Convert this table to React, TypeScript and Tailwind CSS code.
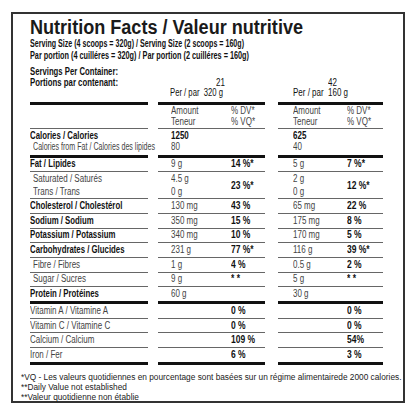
import { useLayoutEffect, useRef, useState, type ReactNode } from "react";

// Helvetica Condensed look: Arial metrics squeezed horizontally
const T = ({ children, s = "scale-x-[0.8]" }: { children: ReactNode; s?: string }) => (
  <span className={`inline-block origin-left whitespace-pre ${s}`}>{children}</span>
);

// squeeze a text until it is exactly w px wide (measured at runtime)
const Fit = ({ w, children }: { w: number; children: ReactNode }) => {
  const ref = useRef<HTMLSpanElement>(null);
  const [k, setK] = useState(1);
  useLayoutEffect(() => {
    const el = ref.current;
    if (el) setK(w / el.getBoundingClientRect().width);
  }, [w]);
  return (
    <span
      ref={ref}
      className="inline-block origin-left whitespace-pre"
      style={{ transform: `scaleX(${k})` }}
    >
      {children}
    </span>
  );
};

type Cell = [string, string];

const Sep = ({ thick }: { thick?: boolean }) => {
  const bar = thick ? "h-[3px] bg-[#111]" : "h-px bg-[#666]";
  return (
    <div className="flex">
      <div className={`w-[118px] ${bar}`} />
      <div className={`ml-[10px] w-[107px] ${bar}`} />
      <div className={`ml-[13px] w-[105px] ${bar}`} />
    </div>
  );
};

const Row = ({
  label,
  kind = "bold",
  a,
  b,
}: {
  label: string;
  kind?: "bold" | "sub" | "plain";
  a: Cell;
  b: Cell;
}) => {
  const lab =
    kind === "bold"
      ? "font-bold text-[#111]"
      : kind === "sub"
        ? "pl-[3px] text-[#444]"
        : "text-[#444]";
  return (
    <div className="flex h-[13.7px] items-center text-[10px] leading-none">
      <div className={`w-[118px] ${lab}`}>
        <T s={kind === "bold" ? "scale-x-[0.78]" : "scale-x-[0.8]"}>{label}</T>
      </div>
      <div className="ml-[10px] flex w-[107px] pl-[13px]">
        <span className="w-[60px] text-[#444]">
          <T>{a[0]}</T>
        </span>
        <span className="font-bold text-[#111]">
          <T s="scale-x-[0.85]">{a[1]}</T>
        </span>
      </div>
      <div className="ml-[13px] flex w-[105px] pl-[15px]">
        <span className="w-[54px] text-[#444]">
          <T>{b[0]}</T>
        </span>
        <span className="font-bold text-[#111]">
          <T s="scale-x-[0.85]">{b[1]}</T>
        </span>
      </div>
    </div>
  );
};

const Head = ({ w }: { w: string }) => (
  <>
    <div className={w}>
      <div>
        <T>Amount</T>
      </div>
      <div>
        <T>Teneur</T>
      </div>
    </div>
    <div>
      <div>
        <T>% DV*</T>
      </div>
      <div>
        <T>% VQ*</T>
      </div>
    </div>
  </>
);

export default function App() {
  return (
    <div className="h-[416px] w-[416px] bg-white pl-[11px] pt-[12px]">
      <div className="h-[391px] w-[394px] border-2 border-[#333] pl-[17px] pt-[3px] [font-family:'Liberation_Sans',Arial,sans-serif]">
        <h1 className="text-[20px] font-black leading-[20px] text-[#1a1a1a]">
          <Fit w={273}>Nutrition Facts / Valeur nutritive</Fit>
        </h1>
        <div className="mt-px text-[10px] font-bold leading-[12px] text-[#111]">
          <div>
            <Fit w={214}>Serving Size (4 scoops = 320g) / Serving Size (2 scoops = 160g)</Fit>
          </div>
          <div>
            <Fit w={219}>Par portion (4 cuilléres = 320g) / Par portion (2 cuilléres = 160g)</Fit>
          </div>
        </div>

        <div className="mt-[5px] flex text-[10px] leading-[10.5px] text-[#111]">
          <div className="w-[118px] font-bold">
            <div>
              <Fit w={88}>Servings Per Container:</Fit>
            </div>
            <div>
              <Fit w={88}>Portions par contenant:</Fit>
            </div>
          </div>
          <div className="ml-[10px] w-[107px] pt-[10.5px]">
            <div className="pl-[58px]">
              <T>21</T>
            </div>
            <div className="pl-[12px]">
              <Fit w={53}>Per / par  320 g</Fit>
            </div>
          </div>
          <div className="ml-[13px] w-[105px] pt-[10.5px]">
            <div className="pl-[50px]">
              <T>42</T>
            </div>
            <div className="pl-[15px]">
              <Fit w={55}>Per / par  160 g</Fit>
            </div>
          </div>
        </div>

        <div className="mt-[3px]">
          <Sep thick />
          <div className="flex h-[23px] text-[10px] leading-[11px] text-[#444]">
            <div className="w-[118px]" />
            <div className="ml-[10px] flex w-[107px] pl-[13px]">
              <Head w="w-[60px]" />
            </div>
            <div className="ml-[13px] flex w-[105px] pl-[15px]">
              <Head w="w-[54px]" />
            </div>
          </div>
          <Sep />

          <div className="flex h-[26px] text-[10px] leading-[11px]">
            <div className="w-[118px]">
              <div className="pt-px font-bold text-[#111]">
                <T s="scale-x-[0.78]">Calories / Calories</T>
              </div>
              <div className="pl-[3px] text-[#444]">
                <Fit w={122}>Calories from Fat / Calories des lipides</Fit>
              </div>
            </div>
            <div className="ml-[10px] w-[107px] pl-[13px] pt-px">
              <div className="font-bold text-[#111]">
                <T>1250</T>
              </div>
              <div className="text-[#444]">
                <T>80</T>
              </div>
            </div>
            <div className="ml-[13px] w-[105px] pl-[15px] pt-px">
              <div className="font-bold text-[#111]">
                <T>625</T>
              </div>
              <div className="text-[#444]">
                <T>40</T>
              </div>
            </div>
          </div>
          <Sep thick />

          <Row label="Fat / Lipides" a={["9 g", "14 %*"]} b={["5 g", "7 %*"]} />
          <Sep />
          <div className="flex h-[26px] text-[10px] leading-[13px] text-[#444]">
            <div className="w-[118px] pl-[3px]">
              <div>
                <T>Saturated / Saturés</T>
              </div>
              <div>
                <T>Trans / Trans</T>
              </div>
            </div>
            <div className="ml-[10px] flex w-[107px] items-center pl-[13px]">
              <div className="w-[60px]">
                <div>
                  <T>4.5 g</T>
                </div>
                <div>
                  <T>0 g</T>
                </div>
              </div>
              <span className="font-bold text-[#111]">
                <T s="scale-x-[0.85]">23 %*</T>
              </span>
            </div>
            <div className="ml-[13px] flex w-[105px] items-center pl-[15px]">
              <div className="w-[54px]">
                <div>
                  <T>2 g</T>
                </div>
                <div>
                  <T>0 g</T>
                </div>
              </div>
              <span className="font-bold text-[#111]">
                <T s="scale-x-[0.85]">12 %*</T>
              </span>
            </div>
          </div>
          <Sep />
          <Row label="Cholesterol / Cholestérol" a={["130 mg", "43 %"]} b={["65 mg", "22 %"]} />
          <Sep />
          <Row label="Sodium / Sodium" a={["350 mg", "15 %"]} b={["175 mg", "8 %"]} />
          <Sep />
          <Row label="Potassium / Potassium" a={["340 mg", "10 %"]} b={["170 mg", "5 %"]} />
          <Sep />
          <Row label="Carbohydrates / Glucides" a={["231 g", "77 %*"]} b={["116 g", "39 %*"]} />
          <Sep />
          <Row label="Fibre / Fibres" kind="sub" a={["1 g", "4 %"]} b={["0.5 g", "2 %"]} />
          <Sep />
          <Row label="Sugar / Sucres" kind="sub" a={["9 g", "* *"]} b={["5 g", "* *"]} />
          <Sep />
          <Row label="Protein / Protéines" a={["60 g", ""]} b={["30 g", ""]} />
          <Sep thick />
          <Row label="Vitamin A / Vitamine A" kind="plain" a={["", "0 %"]} b={["", "0 %"]} />
          <Sep />
          <Row label="Vitamin C / Vitamine C" kind="plain" a={["", "0 %"]} b={["", "0 %"]} />
          <Sep />
          <Row label="Calcium / Calcium" kind="plain" a={["", "109 %"]} b={["", "54%"]} />
          <Sep />
          <Row label="Iron / Fer" kind="plain" a={["", "6 %"]} b={["", "3 %"]} />
          <Sep thick />
        </div>

        <div className="-ml-[9px] mt-[8px] text-[8.3px] leading-[9.5px] text-[#222]">
          <div className="mb-px">
            *VQ - Les valeurs quotidiennes en pourcentage sont basées sur un régime alimentairede 2000 calories.
          </div>
          <div>**Daily Value not established</div>
          <div>**Valeur quotidienne non établie</div>
        </div>
      </div>
    </div>
  );
}
